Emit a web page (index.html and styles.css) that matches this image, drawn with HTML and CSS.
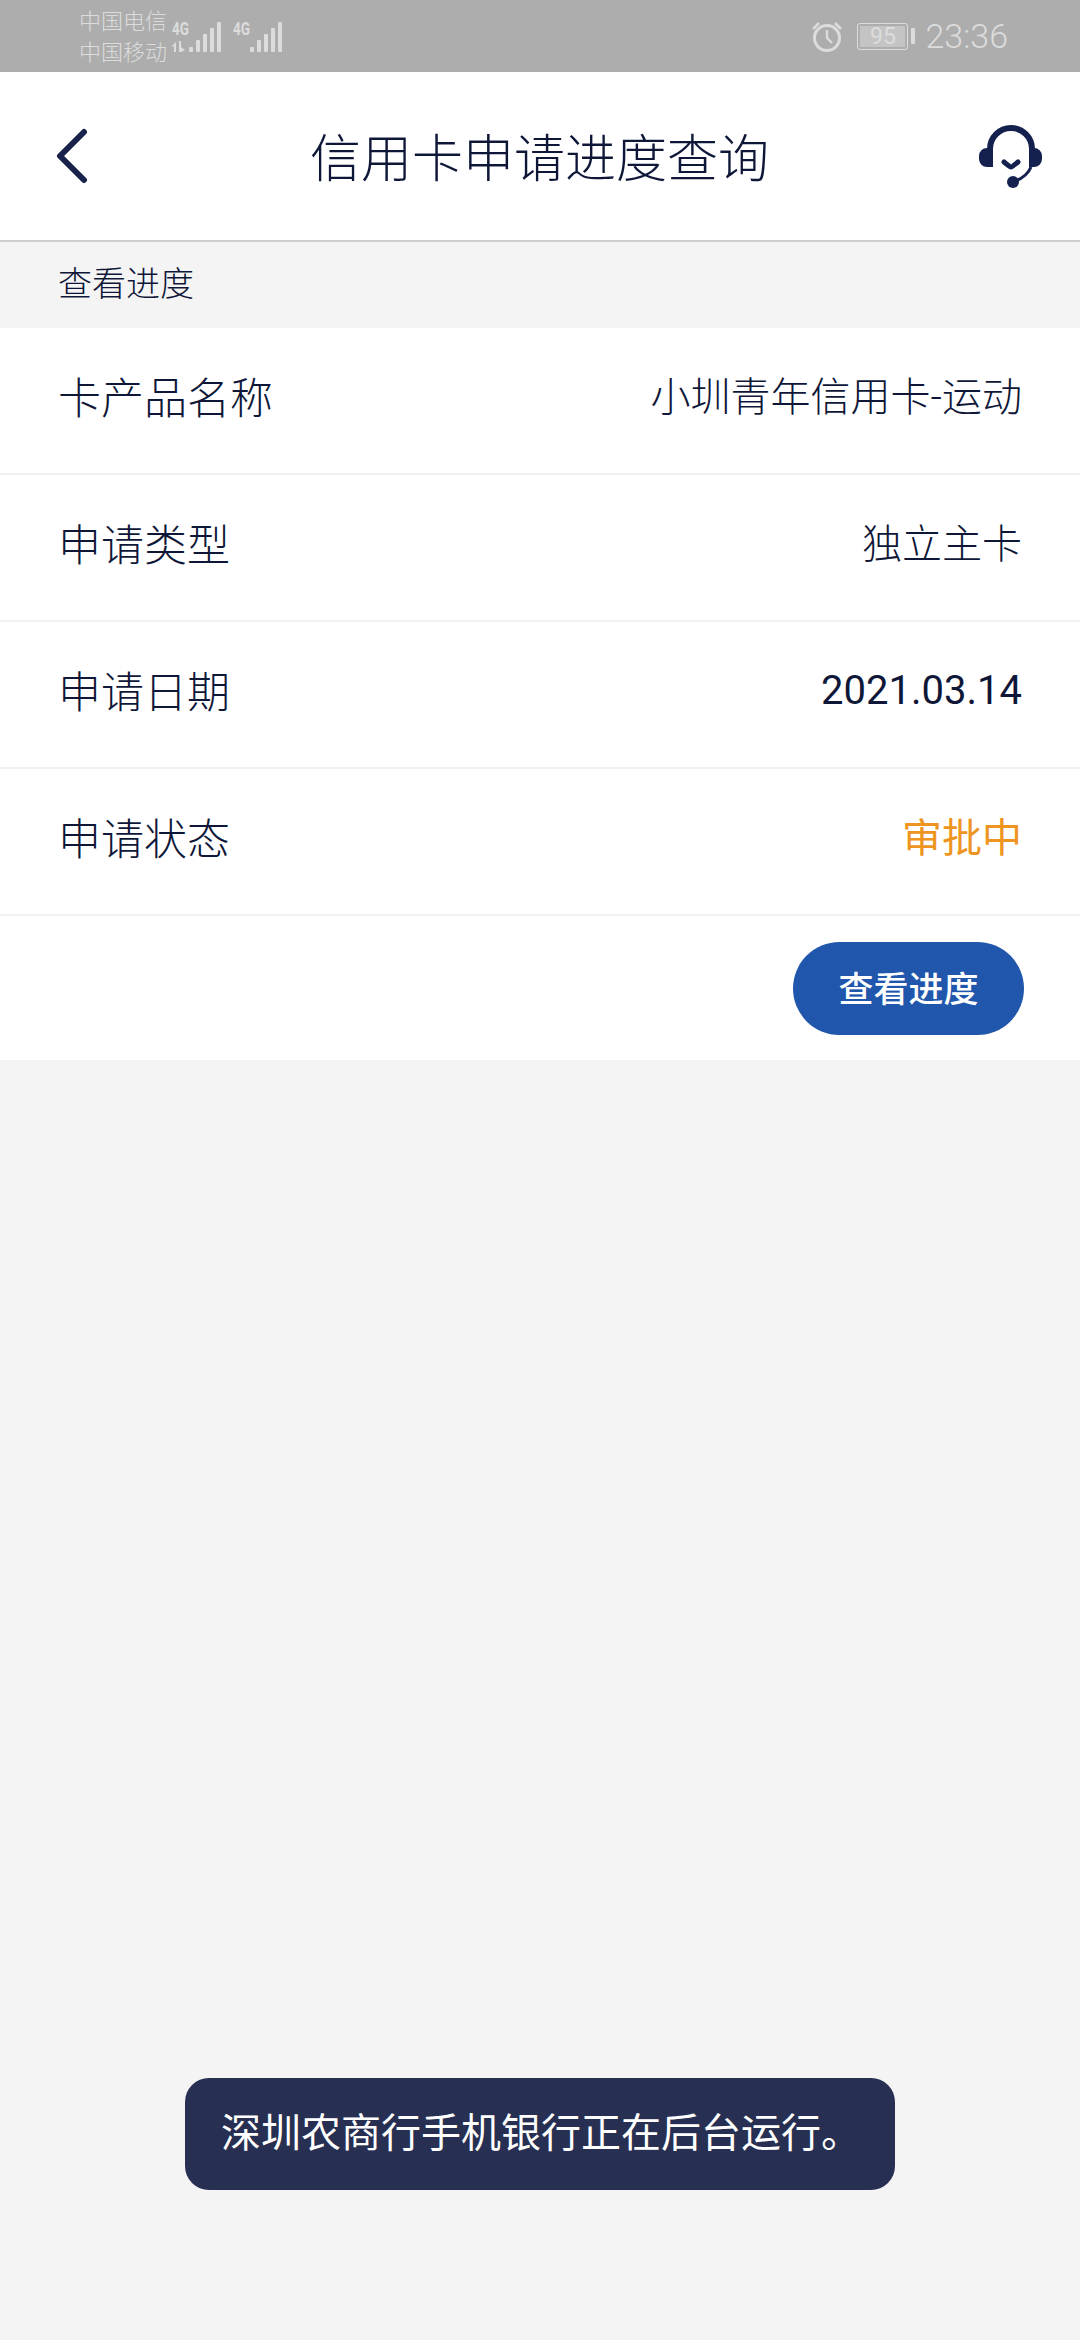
FILE: index.html
```html
<!DOCTYPE html>
<html lang="zh-CN">
<head>
<meta charset="utf-8">
<title>信用卡申请进度查询</title>
<link rel="stylesheet" href="styles.css">
</head>
<body>
<div class="statusbar">
 <div class="status-left">
  <div class="carriers">
   <span>中国电信</span>
   <span>中国移动</span>
  </div>
  <svg class="signal" width="52" height="38" viewBox="0 -4 52 38">
   <text x="0" y="14" class="net" textLength="17" lengthAdjust="spacingAndGlyphs">4G</text>
   <path d="M0 25l4-4v10H2v-6l-2 1zM7 20h2v6l4 3-4 2H7z" fill="#dcdcdc"/>
   <rect x="17" y="26" width="4" height="5" rx="1" fill="#dcdcdc"/>
   <rect x="24" y="19" width="4" height="12" rx="1" fill="#dcdcdc"/>
   <rect x="31" y="13" width="4" height="18" rx="1" fill="#dcdcdc"/>
   <rect x="38" y="7" width="4" height="24" rx="1" fill="#dcdcdc"/>
   <rect x="45" y="1" width="4" height="30" rx="1" fill="#dcdcdc"/>
  </svg>
  <svg class="signal second" width="52" height="38" viewBox="0 -4 52 38">
   <text x="0" y="14" class="net" textLength="17" lengthAdjust="spacingAndGlyphs">4G</text>
   <rect x="17" y="26" width="4" height="5" rx="1" fill="#dcdcdc"/>
   <rect x="24" y="19" width="4" height="12" rx="1" fill="#dcdcdc"/>
   <rect x="31" y="13" width="4" height="18" rx="1" fill="#dcdcdc"/>
   <rect x="38" y="7" width="4" height="24" rx="1" fill="#dcdcdc"/>
   <rect x="45" y="1" width="4" height="30" rx="1" fill="#dcdcdc"/>
  </svg>
 </div>
 <div class="status-right">
  <svg class="alarm" width="32" height="32" viewBox="0 0 32 32" fill="none" stroke="#dcdcdc">
   <circle cx="16" cy="18" r="12.5" stroke-width="3"/>
   <path d="M16 10v8l5 5" stroke-width="2.4"/>
   <path d="M2 9l6-6M30 9l-6-6" stroke-width="2.6"/>
  </svg>
  <div class="battery">
   <div class="battery-body"><span class="battery-fill">95</span></div>
   <div class="battery-tip"></div>
  </div>
  <span class="clock">23:36</span>
 </div>
</div>

<div class="header">
 <svg class="back" width="36" height="56" viewBox="0 0 36 56" fill="none">
  <path d="M30 4L6 28l24 24" stroke="#18224a" stroke-width="6" stroke-linecap="round" stroke-linejoin="round"/>
 </svg>
 <div class="title">信用卡申请进度查询</div>
 <svg class="service" width="66" height="66" viewBox="0 0 66 66">
  <path d="M12 31V25a21 21 0 0 1 42 0v6" fill="none" stroke="#14214f" stroke-width="6"/>
  <path d="M15 24v19H9a8 8 0 0 1-8-8v-3a8 8 0 0 1 8-8zM51 24v19h5a8 8 0 0 0 8-8v-3a8 8 0 0 0-8-8z" fill="#14214f"/>
  <path d="M26 38q6 5 7 5t7-5" fill="none" stroke="#14214f" stroke-width="5" stroke-linecap="round"/>
  <path d="M53 43q-4 10-18 15" fill="none" stroke="#14214f" stroke-width="3"/>
  <circle cx="35" cy="58" r="6" fill="#14214f"/>
 </svg>
</div>

<div class="section-title">查看进度</div>

<div class="card">
 <div class="row"><span class="label">卡产品名称</span><span class="value">小圳青年信用卡-运动</span></div>
 <div class="row"><span class="label">申请类型</span><span class="value">独立主卡</span></div>
 <div class="row"><span class="label">申请日期</span><span class="value num">2021.03.14</span></div>
 <div class="row"><span class="label">申请状态</span><span class="value orange">审批中</span></div>
 <div class="action-row"><button type="button" class="btn">查看进度</button></div>
</div>

<div class="toast">深圳农商行手机银行正在后台运行。</div>
</body>
</html>
```
FILE: styles.css
```css
html, body {
 margin: 0;
 padding: 0;
}
body {
 position: relative;
 width: 1080px;
 height: 2340px;
 overflow: hidden;
 background: #f4f4f5;
 color: #0f1738;
 font-family: Roboto, "Noto Sans CJK SC", sans-serif;
 font-weight: 300;
}
.statusbar {
 height: 72px;
 background: #adadad;
 color: #dcdcdc;
 display: flex;
 justify-content: space-between;
 align-items: center;
 padding: 0 72px 0 79px;
}
.status-left {
 display: flex;
 align-items: center;
}
.carriers {
 display: flex;
 flex-direction: column;
 font-size: 22px;
 line-height: 31px;
 width: 93px;
 padding-top: 2px;
}
.signal {
 margin-top: -1px;
}
.signal.second {
 margin-left: 9px;
}
.net {
 font-size: 19px;
 font-weight: 700;
 fill: #dcdcdc;
}
.status-right {
 display: flex;
 align-items: center;
}
.alarm {
 margin-right: 14px;
}
.battery {
 display: flex;
 align-items: center;
 margin-right: 10px;
}
.battery-body {
 width: 51px;
 height: 27px;
 padding: 2px;
 box-sizing: border-box;
 border: 1px solid #dcdcdc;
 border-radius: 3px;
}
.battery-fill {
 display: block;
 width: 100%;
 height: 100%;
 background: #c4c4c4;
 font-size: 23px;
 font-weight: 400;
 line-height: 21px;
 text-align: center;
}
.battery-tip {
 width: 4px;
 height: 16px;
 margin-left: 3px;
 background: #dcdcdc;
 border-radius: 1px;
}
.clock {
 font-size: 34px;
}
.header {
 height: 168px;
 background: #fff;
 border-bottom: 2px solid #cfcfd2;
 display: flex;
 align-items: center;
 justify-content: space-between;
 padding: 0 36px 0 54px;
}
.title {
 font-size: 51px;
 line-height: 68px;
 margin-left: 11px;
 margin-top: 8px;
}
.service {
 margin-top: 2px;
}
.section-title {
 height: 86px;
 line-height: 84px;
 padding-left: 58px;
 font-size: 34px;
 background: #f4f4f5;
}
.card {
 background: #fff;
}
.row {
 height: 147px;
 box-sizing: border-box;
 border-bottom: 2px solid #f1f1f2;
 padding: 0 58px 12px;
 display: flex;
 align-items: center;
 justify-content: space-between;
}
.label {
 font-size: 43px;
}
.value {
 font-size: 40px;
 margin-bottom: 2px;
}
.num {
 font-weight: 400;
 margin-bottom: 0;
 margin-top: 3px;
}
.orange {
 color: #ee9420;
 font-weight: 400;
}
.action-row {
 height: 144px;
 padding-right: 56px;
 display: flex;
 align-items: center;
 justify-content: flex-end;
}
.btn {
 width: 231px;
 height: 93px;
 border: 0;
 border-radius: 47px;
 background: #2056ab;
 color: #fff;
 font-family: inherit;
 font-size: 35px;
 font-weight: 500;
 padding: 0 0 4px;
}
.toast {
 position: absolute;
 left: 185px;
 top: 2078px;
 width: 710px;
 height: 112px;
 line-height: 112px;
 border-radius: 24px;
 background: #272f52;
 color: #fff;
 font-size: 40px;
 font-weight: 400;
 padding-left: 36px;
 box-sizing: border-box;
 white-space: nowrap;
}
```
